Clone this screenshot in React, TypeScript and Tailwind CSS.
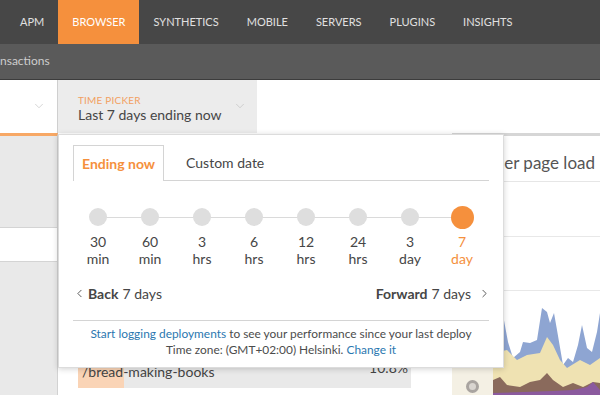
import { ChevronDown, ChevronLeft, ChevronRight } from 'lucide-react';

const NAV = ['APM', 'BROWSER', 'SYNTHETICS', 'MOBILE', 'SERVERS', 'PLUGINS', 'INSIGHTS'];

const STEPS = [
  ['30', 'min'],
  ['60', 'min'],
  ['3', 'hrs'],
  ['6', 'hrs'],
  ['12', 'hrs'],
  ['24', 'hrs'],
  ['3', 'day'],
  ['7', 'day'],
];

function TopNav() {
  return (
    <nav className="h-[44px] bg-[#474747] flex items-stretch pl-[6px] shrink-0">
      {NAV.map((item) => (
        <div
          key={item}
          className={
            item === 'BROWSER'
              ? 'px-[14px] flex items-center bg-[#f5903d] text-white text-[11px]'
              : 'px-[14px] flex items-center text-[#e0e0e0] text-[11px]'
          }
        >
          {item}
        </div>
      ))}
    </nav>
  );
}

function FilterRow() {
  return (
    <div className="h-[53px] flex bg-white shrink-0">
      <div className="w-[57px] flex items-center justify-end pr-[11px] pb-[1px]">
        <ChevronDown size={14} strokeWidth={1} className="text-[#b8b8b8]" />
      </div>
      <div className="w-[200px] bg-[#ececec] border-l border-[#cfcfcf] pl-[20px] pr-[10px] flex items-center justify-between">
        <div className="flex flex-col pt-[3px]">
          <span className="text-[10px] leading-[12px] text-[#f2a061] tracking-[0.2px]">TIME PICKER</span>
          <span className="text-[14px] leading-[17px] text-[#464646]">Last 7 days ending now</span>
        </div>
        <ChevronDown size={14} strokeWidth={1} className="text-[#b8b8b8] mb-[2px]" />
      </div>
    </div>
  );
}

function Chart() {
  const blue = [
    [0, 30], [10, 24], [15, 51], [20, 67], [27, 61], [30, 51], [37, 52], [44, 49], [49, 17], [54, 21], [57, 32],
    [61, 22], [64, 39], [70, 74], [75, 67], [80, 71], [85, 54], [89, 34], [94, 57], [99, 61], [104, 41], [107, 22],
  ];
  const yellow = [
    [0, 62], [14, 59], [24, 69], [34, 64], [47, 62], [54, 46], [60, 54], [67, 69], [74, 77], [87, 69], [97, 74], [107, 67],
  ];
  const brown = [
    [0, 89], [7, 86], [14, 94], [27, 96], [37, 91], [47, 89], [54, 82], [60, 89], [70, 96], [80, 92], [90, 96], [100, 91], [107, 92],
  ];
  const purple = [
    [0, 102], [30, 101], [60, 100], [80, 99], [94, 96], [100, 91], [107, 99],
  ];
  const area = (pts: number[][]) => `M${pts.map((p) => p.join(',')).join(' L')} L107,104 L0,104 Z`;
  return (
    <svg width="107" height="104" viewBox="0 0 107 104" className="block">
      <path d={area(blue)} fill="#8ea5d2" />
      <path d={area(yellow)} fill="#efe2b2" />
      <path d={area(brown)} fill="#8a6a5c" />
      <path d={area(purple)} fill="#8b5a9e" />
    </svg>
  );
}

function TimePickerPopover() {
  return (
    <div className="absolute left-[58px] top-[134px] w-[446px] h-[234px] bg-white border border-[#dcdcdc] shadow-[0_1px_6px_rgba(0,0,0,0.18)] px-[14px] pt-[10px]">
      <div className="flex items-end border-b border-[#d4d4d4] h-[36px]">
        <div className="h-[36px] px-[8px] border border-b-0 border-[#d4d4d4] bg-white -mb-px flex items-center text-[14px] font-bold text-[#f5903d]">
          Ending now
        </div>
        <div className="h-[36px] px-[22px] flex items-center text-[14px] text-[#464646]">Custom date</div>
      </div>

      <div className="relative mt-[27px] -ml-[1px]">
        <div className="absolute left-[26px] w-[364px] top-[9px] h-px bg-[#dadada]" />
        <div className="relative flex">
          {STEPS.map(([n, u], i) => {
            const active = i === STEPS.length - 1;
            return (
              <div key={i} className="w-[52px] shrink-0 flex flex-col items-center">
                <div className="h-[18px] flex items-center justify-center">
                  <div
                    className={
                      active
                        ? 'w-[23px] h-[23px] shrink-0 rounded-full bg-[#f5903d]'
                        : 'w-[18px] h-[18px] shrink-0 rounded-full bg-[#dedede]'
                    }
                  />
                </div>
                <div
                  className={
                    active
                      ? 'mt-[7px] text-[14px] leading-[17px] text-center text-[#f5903d]'
                      : 'mt-[7px] text-[14px] leading-[17px] text-center text-[#464646]'
                  }
                >
                  <div>{n}</div>
                  <div>{u}</div>
                </div>
              </div>
            );
          })}
        </div>
      </div>

      <div className="flex items-center justify-between mt-[16px] h-[20px] text-[14px] text-[#464646]">
        <div className="flex items-center">
          <ChevronLeft size={13} strokeWidth={1.6} className="text-[#444] mr-[2px]" />
          <span className="font-bold">Back</span>
          <span className="ml-[4px]">7 days</span>
        </div>
        <div className="flex items-center">
          <span className="font-bold">Forward</span>
          <span className="ml-[4px]">7 days</span>
          <ChevronRight size={13} strokeWidth={1.6} className="text-[#444] ml-[7px] -mr-[2px]" />
        </div>
      </div>

      <div className="mt-[17px] border-t border-[#d4d4d4] pt-[5px] text-center text-[11.9px] leading-[16px] text-[#4c4c4c]">
        <div>
          <span className="text-[#2b77b0]">Start logging deployments</span> to see your performance since your last deploy
        </div>
        <div>
          Time zone: (GMT+02:00) Helsinki. <span className="text-[#2b77b0]">Change it</span>
        </div>
      </div>
    </div>
  );
}

export default function App() {
  return (
    <div className="relative w-[600px] h-[395px] overflow-hidden bg-white flex flex-col font-['Lato',sans-serif]">
      <TopNav />
      <div className="h-[36px] bg-[#5a5a5a] border-b border-[#3c3c3c] flex items-center shrink-0">
        <span className="text-[12px] text-[#cdcdcd] -mt-[1px]">nsactions</span>
      </div>
      <FilterRow />

      <div className="flex-1 flex min-h-0">
        <aside className="w-[58px] shrink-0 bg-[#e9e9e9] border-t-[3px] border-[#f7a865] border-r border-r-[#d2d2d2] flex flex-col">
          <div className="h-[91px]" />
          <div className="h-[35px] bg-white border-y border-[#d4d4d4]" />
        </aside>

        <main className="w-[394px] shrink-0 flex flex-col justify-end px-[20px] pb-[7px]">
          <div className="relative w-[333px] h-[30px] bg-[#e9e9e9] flex justify-between">
            <div className="absolute left-0 top-0 bottom-0 bg-[#fad4b6]" style={{ width: '46px' }} />
            <span className="relative pl-[4px] pt-[4px] text-[14px] leading-[20px] text-[#444]">/bread-making-books</span>
            <span className="relative pr-[3px] text-[14px] leading-[20px] text-[#444]">10.8%</span>
          </div>
        </main>

        <section className="flex-1 flex flex-col border-t-[3px] border-[#d6d6d6]">
          <div className="h-[46px] flex items-start justify-end pt-[15px] pr-[5px] overflow-hidden whitespace-nowrap border-b border-[#e6e6e6]">
            <span className="text-[17px] leading-[24px] text-[#555]">Time per page load</span>
          </div>
          <div className="h-[55px] border-b border-[#e8e8e8]" />
          <div className="h-[54px] border-b border-[#e8e8e8]" />
          <div className="flex-1 flex items-end">
            <div className="w-[41px] h-[27px] bg-[#f4f0e4] flex items-end justify-center pb-[1px]">
              <div className="w-[13px] h-[13px] rounded-full border-[3px] border-[#a9a4a0] bg-[#d9d5d0] mb-[1px]" />
            </div>
            <Chart />
          </div>
        </section>
      </div>

      <TimePickerPopover />
    </div>
  );
}
